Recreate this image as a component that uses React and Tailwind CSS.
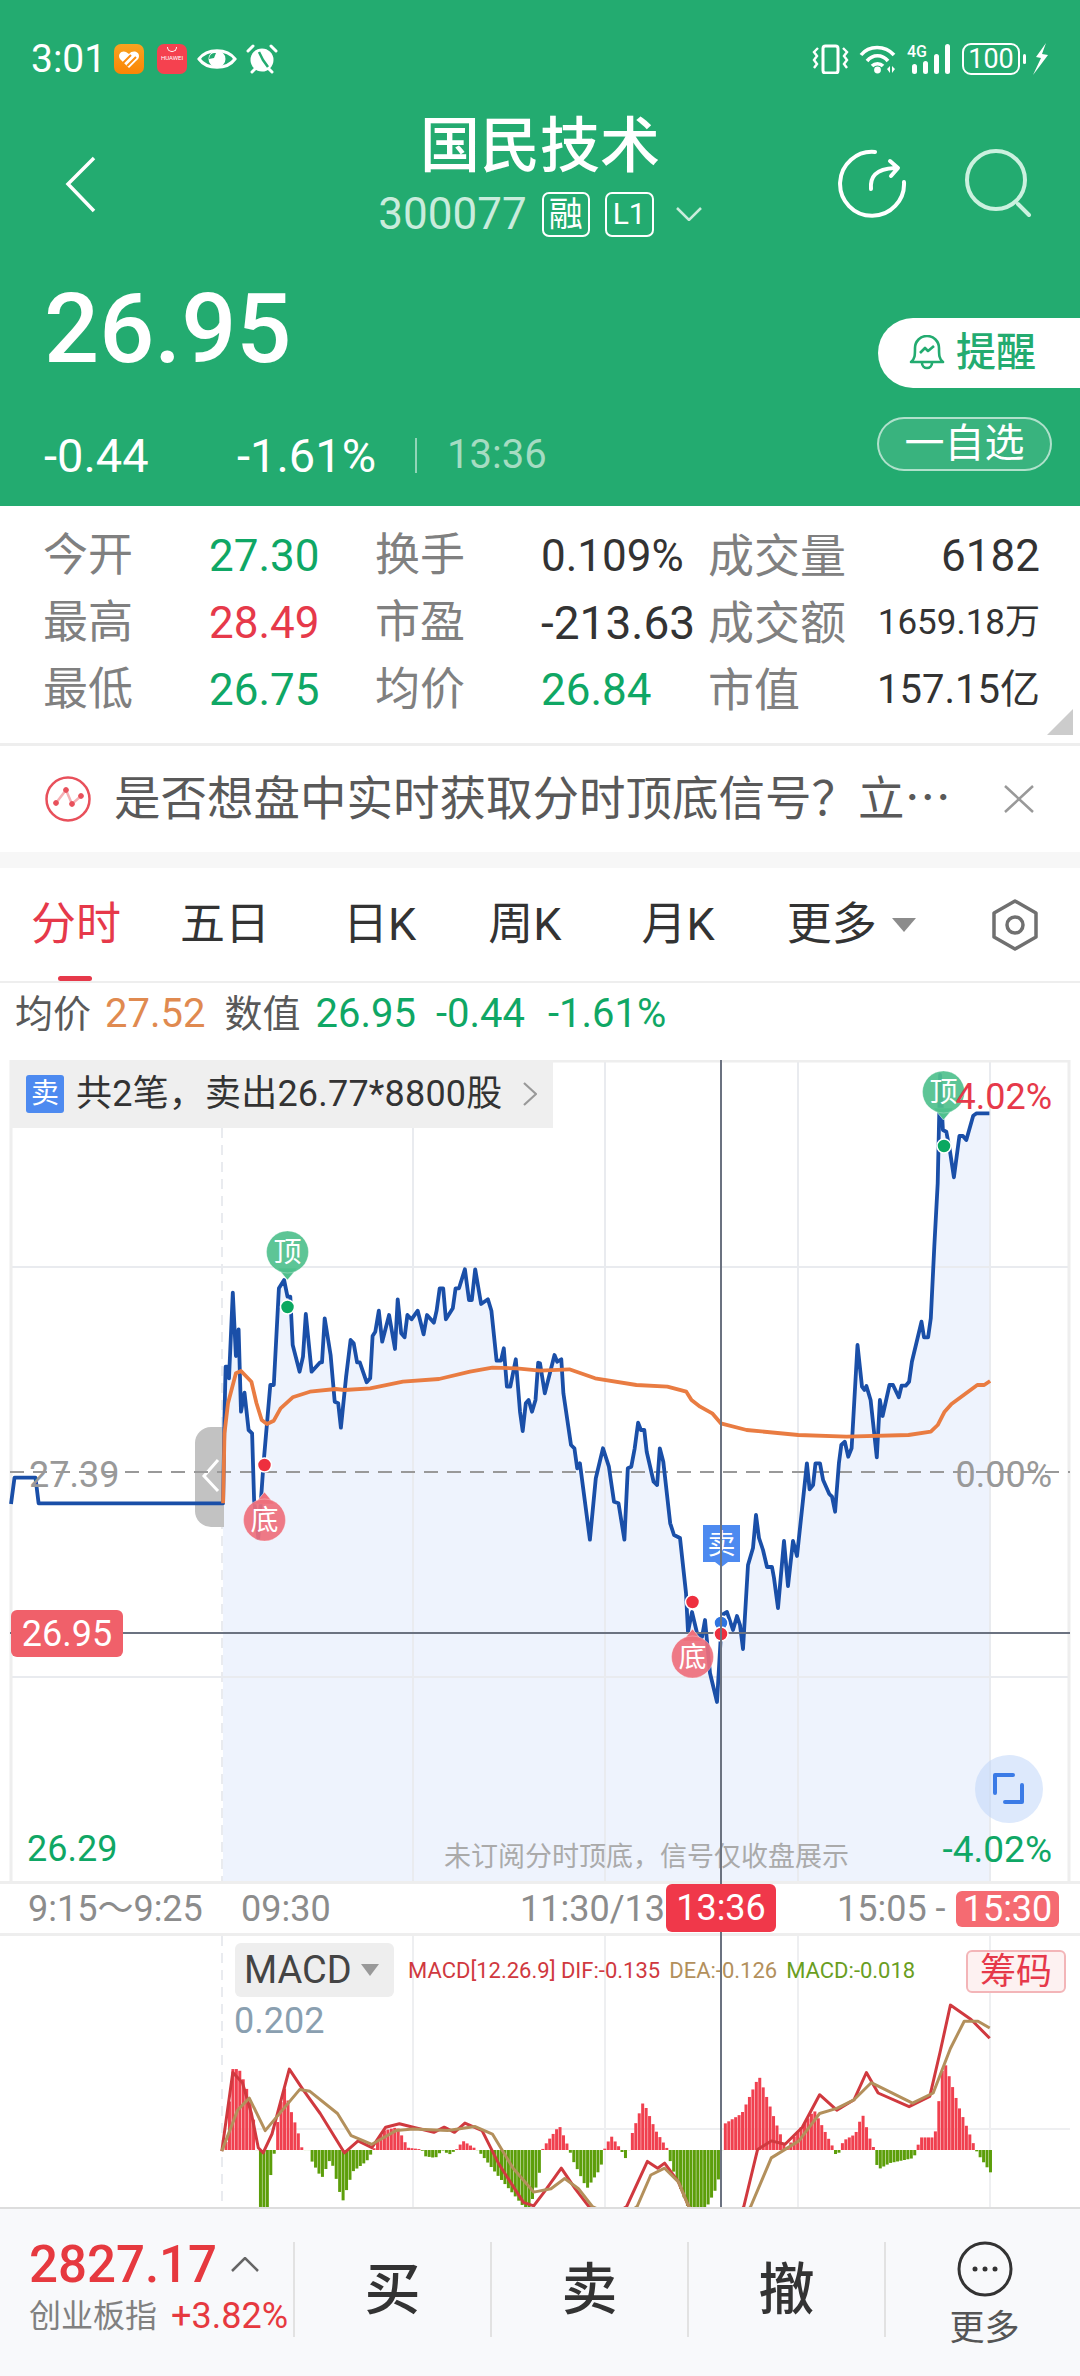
const toPage = (pts, ox, oy) => pts.map(([x, y]) => [ox + x / 2.904, oy + y / 3]);
const toPath = (pts) => pts.map(([x, y], i) => `${i ? "L" : "M"}${x.toFixed(1)} ${y.toFixed(1)}`).join(" ");

const blueA = [[32,1362],[42,1283],[103,1283],[112,1360],[648,1360],[652,1100],[655,950],[660,950],[665,985],[676,728],[685,918],[693,838],[700,1085],[710,1028],[722,1140],[732,1150],[738,1350],[750,1464],[765,1245],[785,1005],[795,1005],[810,715],[825,690],[835,740],[843,740],[850,885],[870,965],[880,920],[888,792],[905,965],[930,937],[935,937],[943,805],[960,915],[972,1055],[982,1060],[990,1133],[1005,980],[1018,870],[1027,880],[1037,937],[1045,937],[1065,997],[1075,985],[1082,858],[1090,845],[1100,782],[1110,875],[1130,795],[1147,897],[1155,748],[1165,850],[1175,862],[1183,795],[1195,808],[1213,782],[1230,853],[1240,795],[1260,818],[1268,782],[1277,715],[1287,715],[1295,808],[1315,775],[1323,715],[1333,715],[1350,658],[1362,750],[1370,750],[1380,658],[1397,762],[1417,748],[1427,782],[1442,932],[1455,932],[1463,895],[1472,1010],[1482,1010],[1498,928],[1510,1085],[1518,1143],[1527,1060],[1535,1050],[1545,1085],[1555,1050],[1563,938]];
const blueB = [[0,940],[14,1030],[42,915],[50,935],[62,928],[68,1030],[90,1185],[100,1195],[108,1255],[116,1240],[145,1469],[162,1285],[183,1195],[200,1250],[215,1355],[228,1360],[245,1469],[255,1255],[265,1250],[275,1195],[285,1118],[293,1140],[303,1140],[310,1205],[330,1295],[340,1305],[348,1195],[358,1235],[378,1420]];
const blueMid = [[674,1535],[680,1538],[686,1593],[688,1632],[692,1612],[697,1633],[702,1637],[705,1620],[710,1673],[717,1702],[721,1633],[722,1615],[727,1612],[733,1630],[737,1616],[740,1625],[743,1649],[748,1565],[753,1548],[756,1515],[759,1538],[763,1550],[767,1567],[772,1567],[774,1578],[778,1608],[784,1541],[788,1586],[793,1541],[797,1556],[803,1500]];
const blueC = [[775,1240],[783,1318],[793,1305],[800,1240],[813,1240],[822,1290],[840,1332],[848,1340],[857,1385],[868,1240],[875,1185],[885,1175],[895,1220],[905,1195],[922,885],[935,1010],[942,1020],[948,1008],[960,1050],[978,1222],[987,1050],[995,1098],[1015,1005],[1025,1005],[1042,1042],[1050,1007],[1062,1007],[1072,995],[1080,935],[1108,815],[1115,862],[1127,862],[1135,805],[1145,590],[1155,400],[1162,75],[1170,240],[1180,245],[1190,300],[1202,382],[1218,258],[1228,258],[1238,270],[1258,197],[1268,190],[1305,190]];
const bluePts = [...toPage(blueA, 0, 1050), ...toPage(blueB, 540, 1050), ...blueMid, ...toPage(blueC, 540, 1050)];
const fillPts = [...bluePts.filter(([x]) => x >= 223), [989.4, 1881], [223, 1881]];

const orangeA = [[648,1360],[652,1150],[662,1060],[685,970],[700,963],[730,995],[745,1060],[760,1110],[775,1122],[795,1112],[815,1075],[850,1042],[900,1025],[975,1017],[1000,1020],[1075,1015],[1170,995],[1275,987],[1365,965],[1430,953],[1500,955],[1568,962]];
const orangeB = [[85,958],[160,985],[280,1005],[370,1010],[425,1025],[440,1050],[465,1070],[500,1090],[525,1120],[600,1140],[750,1155],[890,1160],[1070,1155],[1135,1145],[1155,1125],[1175,1085],[1195,1062],[1270,1005],[1290,1005],[1307,993]];
const orangePts = [...toPage(orangeA, 0, 1050), ...toPage(orangeB, 540, 1050)];

// MACD is read off the lower crop, which is squeezed differently
const macdPage = (pts) => pts.map(([x, y]) => [x / 1.452, 1840 + y / 2.925]);
const envelope = [[325,907],[335,670],[345,670],[355,720],[365,800],[371,907],[372,1020],[378,1100],[385,1100],[392,960],[397,907],[398,860],[410,720],[420,790],[430,850],[437,907],[446,907],[448,930],[465,990],[478,930],[495,1060],[510,970],[530,940],[540,907],[545,880],[555,850],[575,840],[590,900],[610,905],[615,925],[630,930],[640,907],[650,920],[660,907],[670,880],[690,905],[697,920],[720,980],[745,1040],[765,1090],[780,990],[785,907],[790,890],[810,835],[825,907],[828,930],[850,1020],[870,960],[875,907],[885,865],[900,907],[905,935],[911,907],[912,880],[932,765],[950,850],[968,907],[972,950],[1000,1090],[1020,1090],[1040,1010],[1046,907],[1050,830],[1075,800],[1100,690],[1125,830],[1140,907],[1150,870],[1180,790],[1205,890],[1210,907],[1212,930],[1218,907],[1222,880],[1240,860],[1250,800],[1262,880],[1268,907],[1272,965],[1290,945],[1325,930],[1328,907],[1335,870],[1355,870],[1368,640],[1390,780],[1415,907],[1420,925],[1437,975]];
const envelopeAt = (x) => {
  const i = envelope.findIndex(([ex]) => ex >= x);
  if (i <= 0) return envelope[0][1];
  const [x0, y0] = envelope[i - 1];
  const [x1, y1] = envelope[i];
  return y0 + ((y1 - y0) * (x - x0)) / (x1 - x0);
};
const macdBars = [];
for (let x = 326; x <= 1437; x += 5) macdBars.push([x, envelopeAt(x)]);

const difPts = [[322,910],[338,680],[352,710],[365,800],[375,900],[382,915],[395,860],[420,670],[440,730],[465,800],[500,915],[520,880],[540,900],[560,840],[580,830],[600,840],[630,855],[645,840],[660,855],[675,828],[700,850],[725,950],[760,1060],[775,1070],[790,1030],[815,960],[835,1020],[855,1072],[880,1110],[910,1072],[940,940],[955,960],[965,945],[985,1000],[1000,1072],[1040,1200],[1080,1072],[1100,905],[1120,880],[1140,890],[1165,840],[1190,745],[1215,790],[1240,760],[1258,680],[1275,740],[1320,780],[1350,750],[1365,620],[1380,483],[1410,525],[1437,580]];
const deaPts = [[322,910],[345,790],[362,755],[385,850],[410,790],[435,730],[450,735],[490,800],[510,865],[540,890],[575,850],[600,845],[650,850],[690,838],[715,860],[745,960],[775,1030],[800,1020],[820,990],[840,1020],[860,1072],[900,1110],[925,1072],[945,980],[965,960],[985,1000],[1000,1072],[1050,1200],[1090,1072],[1120,930],[1160,880],[1190,800],[1215,785],[1240,760],[1265,710],[1325,770],[1355,740],[1380,610],[1400,530],[1420,530],[1437,550]];

const tabs = [
  { label: "五日", cls: "ml-[59px]" },
  { label: "日K", cls: "ml-[73px]" },
  { label: "周K", cls: "ml-[72px]" },
  { label: "月K", cls: "ml-[80px]" },
];

const stats = [
  ["今开", "27.30", "text-[#0fa765]", "换手", "0.109%", "text-[#333]", "成交量", "6182", "text-[44px]"],
  ["最高", "28.49", "text-[#e6394a]", "市盈", "-213.63", "text-[#333]", "成交额", "1659.18万", "text-[35px]"],
  ["最低", "26.75", "text-[#0fa765]", "均价", "26.84", "text-[#0fa765]", "市值", "157.15亿", "text-[40px]"],
];

function Marker({ cx, cy, label, fill, up }) {
  const tip = up ? cy - 28 : cy + 28;
  const side = up ? cy - 16 : cy + 16;
  return (
    <g>
      <path d={`M${cx - 10} ${side} L${cx} ${tip} L${cx + 10} ${side} Z`} fill={fill} stroke="#fff" strokeOpacity="0.5" />
      <circle cx={cx} cy={cy} r="21" fill={fill} fillOpacity="0.92" stroke="#fff" strokeOpacity="0.3" />
      <text x={cx} y={cy + 10} textAnchor="middle" fontSize="28" fill="#fff">{label}</text>
    </g>
  );
}

function Dot({ cx, cy, fill }) {
  return <circle cx={cx} cy={cy} r="7" fill={fill} stroke="#fff" strokeWidth="1.5" />;
}

function StatusBar() {
  return (
    <div className="flex h-[30px] items-center justify-between pl-[31px] pr-[32px]">
      <div className="flex items-center">
        <span className="w-[83px] text-[39px] leading-none">3:01</span>
        <svg viewBox="0 0 30 30" className="h-[30px] w-[30px]">
          <defs>
            <linearGradient id="appOrange" x1="0" y1="0" x2="0" y2="1">
              <stop offset="0" stopColor="#f9a320" />
              <stop offset="1" stopColor="#fb8505" />
            </linearGradient>
          </defs>
          <rect width="30" height="30" rx="7" fill="url(#appOrange)" />
          <path d="M15 24 L6 15 C3 10 8 6 12 8 L15 10 C18 6 25 7 25 12 C25 15 23 16 22 17 Z" fill="#fff" />
          <path d="M9 19 L17 11 M13 22 L22 13" stroke="#fb8f10" strokeWidth="2" />
        </svg>
        <div className="ml-[13px] flex h-[30px] w-[30px] flex-col items-center rounded-[7px] bg-[#f5414f]">
          <span className="mt-[3px] h-[5px] w-[10px] rounded-b-full border-b border-l border-r border-white" />
          <span className="mt-[3px] text-[6px] leading-none">HUAWEI</span>
        </div>
        <svg viewBox="0 0 40 28" className="ml-[10px] h-[28px] w-[40px]">
          <path d="M2 14 C10 3 30 3 38 14 C30 25 10 25 2 14 Z" fill="none" stroke="#fff" strokeWidth="3" />
          <circle cx="20" cy="14" r="8.5" fill="#fff" />
          <path d="M12 14 A6 6 0 0 1 19 8 L17 13 Z" fill="#23ab70" />
        </svg>
        <svg viewBox="0 0 32 30" className="ml-[9px] h-[30px] w-[32px]">
          <circle cx="16" cy="16" r="11.5" fill="#fff" />
          <path d="M13 8 L17 16 L22 23" fill="none" stroke="#23ab70" strokeWidth="2.5" />
          <path d="M2 7 L7 2 M30 7 L25 2 M6 28 L9 25 M26 28 L23 25" stroke="#fff" strokeWidth="3" strokeLinecap="round" />
        </svg>
      </div>
      <div className="flex items-center">
        <svg viewBox="0 0 37 30" className="h-[30px] w-[37px]" fill="none" stroke="#fff">
          <rect x="11" y="2" width="15" height="27" rx="2.5" strokeWidth="3" />
          <path d="M6 4 L2 8 L5 12 L2 16 L5 20 L2 24 M31 4 L35 8 L32 12 L35 16 L32 20 L35 24" strokeWidth="2.4" />
        </svg>
        <svg viewBox="0 0 38 30" className="ml-[10px] h-[30px] w-[38px]" fill="none" stroke="#fff">
          <path d="M2 11 C10 1 26 1 35 11 M8 17 C14 10 23 10 29 17 M13 22 C16 19 21 19 24 22" strokeWidth="3.6" />
          <circle cx="18.5" cy="26" r="3.4" fill="#fff" stroke="none" />
          <path d="M28 25 L31 22 L31 29 Z M33 22 L36 25 L33 29 Z" fill="#fff" stroke="none" />
        </svg>
        <div className="relative ml-[10px] h-[30px] w-[44px]">
          <span className="absolute left-0 top-0 text-[16px] font-medium leading-none">4G</span>
          <svg viewBox="0 0 44 30" className="absolute inset-0 h-[30px] w-[44px]" fill="#fff">
            <rect x="5" y="20" width="5" height="10" rx="2.5" />
            <rect x="16" y="17" width="5" height="13" rx="2.5" />
            <rect x="27" y="10" width="5" height="20" rx="2.5" />
            <rect x="38" y="0" width="5" height="30" rx="2.5" />
          </svg>
        </div>
        <div className="ml-[11px] flex h-[32px] w-[58px] items-center justify-center rounded-[9px] border-2 border-white text-[27px] leading-none">100</div>
        <span className="ml-[3px] h-[10px] w-[3px] rounded-full bg-white" />
        <svg viewBox="0 0 15 32" className="ml-[7px] h-[32px] w-[15px]" fill="#fff">
          <path d="M13 0 L3 14 L8 15 L0 32 L15 12 L9 11 Z" />
        </svg>
      </div>
    </div>
  );
}

function Header() {
  return (
    <header className="flex h-[506px] shrink-0 flex-col bg-[#23ab70] pt-[44px] text-white">
      <StatusBar />
      <div className="mt-[40px] grid h-[123px] grid-cols-[1fr_auto_1fr] items-start">
        <div className="pl-[65px] pt-[42px]">
          <svg viewBox="0 0 32 57" className="h-[57px] w-[32px]" fill="none" stroke="#fff" strokeWidth="3.5">
            <path d="M29 2 L3 28 L29 55" />
          </svg>
        </div>
        <div className="flex flex-col items-center">
          <h1 className="text-[60px] font-medium leading-[66px]">国民技术</h1>
          <div className="mt-[11px] flex h-[46px] items-center text-[#c9ecdc]">
            <span className="text-[44px] leading-none">300077</span>
            <span className="ml-[15px] flex h-[45px] w-[48px] items-center justify-center rounded-[7px] border-2 border-white text-[34px] leading-none text-white">融</span>
            <span className="ml-[15px] flex h-[45px] w-[49px] items-center justify-center rounded-[7px] border-2 border-white text-[30px] leading-none text-white">L1</span>
            <svg viewBox="0 0 26 14" className="ml-[22px] h-[14px] w-[26px]" fill="none" stroke="#c9ecdc" strokeWidth="2.5">
              <path d="M1 1 L13 13 L25 1" />
            </svg>
          </div>
        </div>
        <div className="flex justify-end gap-[52px] pr-[48px] pt-[34px]">
          <svg viewBox="835 149 70 70" className="h-[70px] w-[70px]" fill="none" stroke="#fff" strokeWidth="4" strokeLinecap="round" strokeLinejoin="round">
            <path d="M872 153 A32 32 0 1 0 901 183" />
            <path d="M868 190 C867 178 872 170 892 169 M887 162 L895 169 L888 177" />
          </svg>
          <svg viewBox="960 149 72 70" className="h-[70px] w-[72px]" fill="none" stroke="#cbf1df" strokeWidth="4" strokeLinecap="round">
            <circle cx="996" cy="181" r="29" />
            <path d="M1018 205 L1029 216" />
          </svg>
        </div>
      </div>
      <div className="flex items-start justify-between pl-[44px]">
        <div>
          <div className="mt-[42px] text-[97px] font-medium leading-[100px]">26.95</div>
          <div className="mt-[53px] flex h-[46px] items-center text-[47px] leading-none">
            <span className="w-[193px]">-0.44</span>
            <span className="w-[178px]">-1.61%</span>
            <span className="h-[35px] w-[2px] bg-white/50" />
            <span className="ml-[30px] text-[40px] text-[#a5dcc2]">13:36</span>
          </div>
        </div>
        <div className="mt-[81px] flex flex-col items-end">
          <div className="flex h-[70px] w-[202px] items-center rounded-l-[35px] bg-white pl-[31px] text-[#23ab70]">
            <svg viewBox="0 0 36 36" className="h-[36px] w-[36px]" fill="none" stroke="#23ab70" strokeWidth="2.6" strokeLinejoin="round">
              <path d="M2 27 C6 24 6 20 6 13 A12 12 0 0 1 30 13 C30 20 30 24 34 27 Z" />
              <path d="M13 28 A5 5 0 0 0 23 28" />
              <path d="M11 18 L16 13 L19 16 L25 11" />
            </svg>
            <span className="ml-[11px] text-[40px] font-medium leading-none">提醒</span>
          </div>
          <div className="mr-[28px] mt-[29px] flex h-[54px] w-[175px] items-center justify-center rounded-[27px] border-2 border-white/60 bg-white/10 text-[40px] leading-none">一自选</div>
        </div>
      </div>
    </header>
  );
}

function Stats() {
  return (
    <section className="relative h-[240px] shrink-0 border-b-[3px] border-[#eeeeee] pl-[43px] pr-[40px] pt-[16px]">
      {stats.map((row) => (
        <div key={row[0]} className="grid h-[67px] grid-cols-[166px_166px_166px_167px_145px_1fr] items-center leading-none">
          <span className="text-[45px] text-[#808080]">{row[0]}</span>
          <span className={`text-[44px] ${row[2]}`}>{row[1]}</span>
          <span className="text-[45px] text-[#808080]">{row[3]}</span>
          <span className={`whitespace-nowrap ${row[4].length > 6 ? "text-[46px]" : "text-[44px]"} ${row[5]}`}>{row[4]}</span>
          <span className="text-[46px] text-[#808080]">{row[6]}</span>
          <span className={`whitespace-nowrap text-right text-[#333] ${row[8]}`}>{row[7]}</span>
        </div>
      ))}
      <svg viewBox="0 0 26 26" className="absolute bottom-[8px] right-[7px] h-[26px] w-[26px]" fill="#cccccc">
        <path d="M26 0 L26 26 L0 26 Z" />
      </svg>
    </section>
  );
}

function Banner() {
  return (
    <section className="flex h-[106px] shrink-0 items-center pl-[45px] pr-[46px]">
      <svg viewBox="0 0 46 46" className="h-[46px] w-[46px]" fill="none" stroke="#e8505b" strokeWidth="2.5">
        <circle cx="23" cy="23" r="21.5" />
        <path d="M11 27 L21 14 L27 28 L36 20" strokeOpacity="0.45" />
        <circle cx="11" cy="27" r="2.4" fill="#e8505b" strokeWidth="1" />
        <circle cx="21" cy="14" r="2.4" fill="#e8505b" strokeWidth="1" />
        <circle cx="27" cy="28" r="2.4" fill="#e8505b" strokeWidth="1" />
        <circle cx="36" cy="20" r="2.4" fill="#e8505b" strokeWidth="1" />
      </svg>
      <span className="ml-[23px] whitespace-nowrap text-[46.5px] leading-none text-[#595959]">{"是否想盘中实时获取分时顶底信号\uFF1F立\u22EF"}</span>
      <svg viewBox="0 0 30 28" className="ml-auto h-[28px] w-[30px]" fill="none" stroke="#999" strokeWidth="2.5">
        <path d="M1 1 L29 27 M29 1 L1 27" />
      </svg>
    </section>
  );
}

function Tabs() {
  return (
    <nav className="relative flex h-[115px] shrink-0 items-center border-b-2 border-[#eeeeee] pl-[31px] text-[45px] leading-none text-[#333]">
      <span className="text-[#e6394a]">分时</span>
      {tabs.map((tab) => (
        <span key={tab.label} className={tab.cls}>{tab.label}</span>
      ))}
      <span className="ml-[72px]">更多</span>
      <svg viewBox="0 0 24 14" className="ml-[15px] h-[14px] w-[24px]" fill="#8c8c8c">
        <path d="M0 0 L24 0 L12 14 Z" />
      </svg>
      <svg viewBox="0 0 48 52" className="ml-[75px] h-[52px] w-[48px]" fill="none" stroke="#707070" strokeWidth="3.5">
        <path d="M24 2 L45 14 L45 38 L24 50 L3 38 L3 14 Z" strokeLinejoin="round" />
        <circle cx="24" cy="26" r="8" />
      </svg>
      <span className="absolute bottom-0 left-[58px] h-[5px] w-[34px] rounded-full bg-[#e6394a]" />
    </nav>
  );
}

function InfoLine() {
  return (
    <div className="flex h-[77px] shrink-0 items-center whitespace-nowrap pb-[15px] pl-[15px] text-[40px] leading-none">
      <span className="text-[38px] text-[#595959]">均价</span>
      <span className="ml-[14px] text-[#e08a50]">27.52</span>
      <span className="ml-[19px] text-[38px] text-[#595959]">数值</span>
      <span className="ml-[15px] text-[#0fa765]">26.95</span>
      <span className="ml-[20px] text-[#0fa765]">-0.44</span>
      <span className="ml-[23px] text-[#0fa765]">-1.61%</span>
    </div>
  );
}

function PriceChart() {
  return (
    <section className="relative h-[821px] shrink-0 overflow-hidden">
      <svg viewBox="0 1060 1080 821" className="absolute inset-0 h-[821px] w-[1080px]" fill="none">
        <path d={`${toPath(fillPts)} Z`} fill="#eef3fd" stroke="none" />
        <g stroke="#e9ebef" strokeWidth="2">
          <path d="M413 1060 V1881 M605 1060 V1881 M798 1060 V1881 M990 1060 V1881" />
          <path d="M11 1267 H1069 M11 1677 H1069" />
        </g>
        <path d="M222 1060 V1881" stroke="#e9ebef" strokeWidth="2" strokeDasharray="10 7" />
        <path d="M11 1060 V1881 M1069 1060 V1881 M10 1061 H1070" stroke="#eeeeee" strokeWidth="3" />
        <path d="M211 1427 H224 V1527 H211 A16 16 0 0 1 195 1511 V1443 A16 16 0 0 1 211 1427 Z" fill="#c2c2c2" />
        <path d="M218 1460 L204 1476 L218 1491" stroke="#fff" strokeWidth="3" />
        <path d="M10 1472 H1070" stroke="#999" strokeWidth="2" strokeDasharray="14 9" />
        <path d={toPath(bluePts)} stroke="#1a4fa8" strokeWidth="3.8" strokeLinejoin="round" />
        <path d={toPath(orangePts)} stroke="#e97c42" strokeWidth="3.8" strokeLinejoin="round" />
        <path d="M10 1633 H1070" stroke="#6b7280" strokeWidth="2" />
        <Marker cx={287.5} cy={1252} label="顶" fill="#4fc08d" />
        <Dot cx={287.5} cy={1307} fill="#0aa860" />
        <Dot cx={264.5} cy={1465} fill="#ee2f3e" />
        <Marker cx={264.5} cy={1520} label="底" fill="#ee6f7c" up />
        <Dot cx={692.5} cy={1602} fill="#ee2f3e" />
        <Marker cx={692.5} cy={1657} label="底" fill="#ee6f7c" up />
        <path d="M703 1525 H740 V1562 H728 L721.5 1567 L715 1562 H703 Z" fill="#4d8af0" />
        <text x="721.5" y="1554" textAnchor="middle" fontSize="28" fill="#fff">卖</text>
        <Dot cx={721} cy={1623} fill="#2f74e0" />
        <Dot cx={721} cy={1634} fill="#ee2f3e" />
        <Marker cx={943.5} cy={1092} label="顶" fill="#4fc08d" />
        <Dot cx={944} cy={1146} fill="#0aa860" />
        <circle cx="1009" cy="1789" r="34" fill="#bcd3fa" fillOpacity="0.5" />
        <path d="M1013 1775 H995 V1793 M1022 1785 V1802 H1005" stroke="#3b7be6" strokeWidth="4" strokeLinecap="round" strokeLinejoin="round" />
      </svg>
      <div className="absolute left-[10px] top-0 flex h-[68px] w-[543px] items-center bg-[#efefef] pl-[16px] pr-[16px]">
        <span className="flex h-[38px] w-[38px] items-center justify-center rounded-[3px] bg-[#4d8af0] text-[28px] leading-none text-white">卖</span>
        <span className="ml-[12px] whitespace-nowrap text-[36px] leading-none tracking-[0.2px] text-[#333]">{"共2笔\uFF0C卖出26.77*8800股"}</span>
        <svg viewBox="0 0 14 24" className="ml-auto h-[24px] w-[14px]" fill="none" stroke="#999" strokeWidth="2.2">
          <path d="M1 1 L13 12 L1 23" />
        </svg>
      </div>
      <span className="absolute left-[29px] top-[396px] text-[36px] leading-[38px] text-[#999]">27.39</span>
      <span className="absolute right-[28px] top-[18px] text-[36px] leading-[38px] text-[#e6394a]">4.02%</span>
      <span className="absolute right-[28px] top-[396px] text-[36px] leading-[38px] text-[#999]">0.00%</span>
      <span className="absolute left-[11px] top-[550px] flex h-[47px] w-[112px] items-center justify-center rounded-[6px] bg-[#f0606a] text-[36px] leading-none text-white">26.95</span>
      <span className="absolute left-[27px] top-[770px] text-[36px] leading-[38px] text-[#0fa765]">26.29</span>
      <span className="absolute right-[28px] top-[771px] text-[37px] leading-[38px] text-[#0fa765]">-4.02%</span>
      <span className="absolute left-[444px] top-[783px] text-[27px] leading-[28px] text-[#aaaaaa]">{"未订阅分时顶底\uFF0C信号仅收盘展示"}</span>
    </section>
  );
}

function TimeAxis() {
  return (
    <div className="flex h-[55px] shrink-0 items-center whitespace-nowrap border-b-[3px] border-t-[3px] border-[#eeeeee] pl-[28px] text-[36px] leading-none text-[#8c8c8c]">
      <span className="w-[213px]">{"9:15\uFF5E9:25"}</span>
      <span className="w-[279px]">09:30</span>
      <span className="w-[317px]">11:30/13</span>
      <span className="w-[119px]">15:05 -</span>
      <span className="flex h-[36px] w-[103px] items-center justify-center rounded-[6px] bg-[#f56b72] text-white">15:30</span>
    </div>
  );
}

function MacdPanel() {
  return (
    <section className="relative h-[271px] shrink-0 overflow-hidden">
      <svg viewBox="0 1936 1080 271" className="absolute inset-0 h-[271px] w-[1080px]" fill="none">
        <g stroke="#eeeff1" strokeWidth="2">
          <path d="M413 1936 V2207 M605 1936 V2207 M798 1936 V2207 M990 1936 V2207" />
          <path d="M222 2129 H1070" />
        </g>
        <path d="M222 1936 V2207" stroke="#e9ebef" strokeWidth="2" strokeDasharray="10 7" />
        {macdBars.map(([x, y]) => (
          <rect
            key={x}
            x={x / 1.452}
            y={Math.min(2150, 1840 + y / 2.925)}
            width="3"
            height={Math.abs(1840 + y / 2.925 - 2150)}
            fill={y < 907 ? "#f0404f" : "#5c9e0a"}
          />
        ))}
        <path d={toPath(macdPage(difPts))} stroke="#d0393f" strokeWidth="3" strokeLinejoin="round" />
        <path d={toPath(macdPage(deaPts))} stroke="#b3905c" strokeWidth="3" strokeLinejoin="round" />
      </svg>
      <div className="absolute left-[235px] top-[7px] flex h-[54px] w-[159px] items-center rounded-[6px] bg-[#eeeeee] pl-[9px]">
        <span className="text-[38px] leading-none text-[#444]">MACD</span>
        <svg viewBox="0 0 18 12" className="ml-[9px] h-[12px] w-[18px]" fill="#999">
          <path d="M0 0 L18 0 L9 12 Z" />
        </svg>
      </div>
      <div className="absolute left-[408px] top-[21px] flex gap-[9px] whitespace-nowrap text-[22px] leading-[28px]">
        <span className="text-[#d0393f]">MACD[12.26.9] DIF:-0.135</span>
        <span className="text-[#b3905c]">DEA:-0.126</span>
        <span className="text-[#6a9e1f]">MACD:-0.018</span>
      </div>
      <span className="absolute left-[966px] top-[14px] flex h-[43px] w-[100px] items-center justify-center rounded-[6px] border-2 border-[#f3b5b8] bg-[#fdf1f1] text-[36px] leading-none text-[#e6394a]">筹码</span>
      <span className="absolute left-[234px] top-[66px] text-[36px] leading-[38px] text-[#8a9fb0]">0.202</span>
    </section>
  );
}

function BottomBar() {
  return (
    <footer className="flex h-[169px] shrink-0 items-center border-t-2 border-[#dddddd] bg-[#f8f9fb] pb-[6px]">
      <div className="flex h-[95px] w-[295px] flex-col justify-between border-r-2 border-[#e2e2e2] pb-[3px] pl-[29px]">
        <div className="-mt-[3px] flex items-center">
          <span className="text-[51px] font-medium leading-none text-[#e6393f]">2827.17</span>
          <svg viewBox="0 0 28 15" className="ml-[14px] h-[15px] w-[28px]" fill="none" stroke="#666" strokeWidth="2.5">
            <path d="M1 14 L14 1 L27 14" />
          </svg>
        </div>
        <div className="flex items-center whitespace-nowrap leading-none">
          <span className="text-[32px] text-[#808080]">创业板指</span>
          <span className="ml-[14px] text-[36px] text-[#e6393f]">+3.82%</span>
        </div>
      </div>
      {["买", "卖", "撤"].map((action) => (
        <div key={action} className="flex h-[95px] w-[197px] items-center justify-center border-r-2 border-[#e2e2e2] text-[56px] font-medium leading-none text-[#333]">
          {action}
        </div>
      ))}
      <div className="flex flex-1 flex-col items-center pl-[3px] pt-[8px]">
        <svg viewBox="0 0 56 56" className="h-[56px] w-[56px]" fill="none">
          <circle cx="28" cy="28" r="26" stroke="#333" strokeWidth="3" />
          <circle cx="18" cy="28" r="2.5" fill="#333" />
          <circle cx="28" cy="28" r="2.5" fill="#333" />
          <circle cx="38" cy="28" r="2.5" fill="#333" />
        </svg>
        <span className="mt-[14px] text-[35px] leading-none text-[#555]">更多</span>
      </div>
    </footer>
  );
}

export default function App() {
  return (
    <div className="relative flex h-[2376px] w-[1080px] flex-col overflow-hidden bg-white font-[Roboto,'Noto_Sans_CJK_SC',sans-serif]">
      <Header />
      <Stats />
      <Banner />
      <div className="h-[16px] shrink-0 bg-[#f7f7f7]" />
      <Tabs />
      <InfoLine />
      <PriceChart />
      <TimeAxis />
      <MacdPanel />
      <BottomBar />
      <span className="absolute left-[720px] top-[1060px] h-[1147px] w-[2px] bg-[#6b7280]" />
      <span className="absolute left-[666px] top-[1884px] flex h-[48px] w-[110px] items-center justify-center rounded-[6px] bg-[#f0384a] text-[36px] leading-none text-white">13:36</span>
    </div>
  );
}
